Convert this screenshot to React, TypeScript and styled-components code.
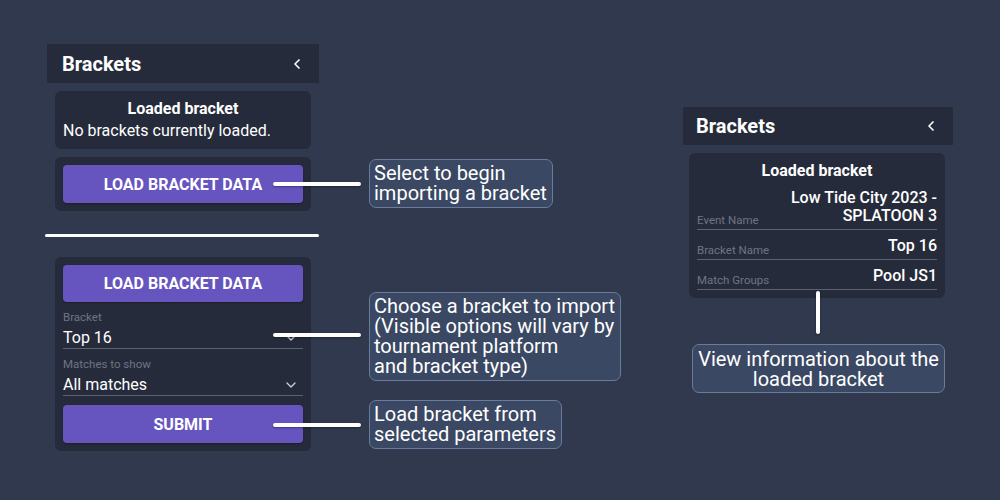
import styled, { createGlobalStyle } from 'styled-components';
import { ChevronLeft, ChevronDown } from 'lucide-react';

const GlobalStyle = createGlobalStyle`
  html, body {
    margin: 0;
    padding: 0;
    background: #30394d;
  }
  body {
    font-family: Roboto, 'Noto Sans', sans-serif;
    color: #ffffff;
  }
`;

const Page = styled.div`
  width: 1000px;
  height: 500px;
  display: flex;
  align-items: flex-start;
  background: #30394d;
  box-sizing: border-box;
  padding: 44px 0 0 47px;
  gap: 364px;
`;

const Column = styled.div<{ $top?: number; $width: number }>`
  width: ${(p) => p.$width}px;
  display: flex;
  flex-direction: column;
  margin-top: ${(p) => p.$top || 0}px;
`;

const Header = styled.div<{ $height: number; $pad: number }>`
  height: ${(p) => p.$height}px;
  background: #262b3b;
  display: flex;
  align-items: center;
  justify-content: space-between;
  padding: 0 14px 0 ${(p) => p.$pad}px;
  font-size: 20px;
  font-weight: 700;
`;

const Card = styled.div<{ $margin?: string }>`
  margin: ${(p) => p.$margin || '8px 8px 0 8px'};
  background: #262b3b;
  border-radius: 6px;
  padding: 8px;
  display: flex;
  flex-direction: column;
`;

const CardTitle = styled.div`
  text-align: center;
  font-size: 16px;
  font-weight: 700;
  line-height: 16px;
  margin-top: 2px;
`;

const Plain = styled.div`
  font-size: 16px;
  line-height: 20px;
  margin-top: 4px;
`;

const Anchor = styled.div<{ $mt?: number }>`
  position: relative;
  margin-top: ${(p) => p.$mt || 0}px;
`;

const Button = styled.button<{ $h?: number }>`
  width: 100%;
  height: ${(p) => p.$h || 38}px;
  border: none;
  border-radius: 4px;
  background: #6654bf;
  color: #ffffff;
  font-family: Roboto, sans-serif;
  font-weight: 700;
  font-size: 16px;
  text-transform: uppercase;
  box-shadow: 0 1px 2px rgba(0, 0, 0, 0.3);
`;

const HConnector = styled.div<{ $left: number; $top: number }>`
  position: absolute;
  left: ${(p) => p.$left}px;
  top: ${(p) => p.$top}px;
  width: 88px;
  height: 4px;
  border-radius: 2px;
  background: #ffffff;
  box-shadow: 0 1px 2px rgba(0, 0, 0, 0.35);
  z-index: 2;
`;

const Callout = styled.div<{ $left?: number; $top?: number }>`
  position: absolute;
  left: ${(p) => p.$left || 0}px;
  top: ${(p) => p.$top || 0}px;
  background: #3a4863;
  border: 1px solid #6a7b9b;
  border-radius: 7px;
  padding: 3px 5px 4px 4px;
  font-size: 20px;
  line-height: 20px;
  white-space: nowrap;
  z-index: 2;
`;

const Separator = styled.div`
  height: 3px;
  margin: 23px 0 12px -2px;
  background: #ffffff;
  border-radius: 2px;
`;

const Field = styled.div`
  display: flex;
  flex-direction: column;
  border-bottom: 1px solid #5d6270;
  padding-top: 8px;
`;

const FieldLabel = styled.div`
  font-size: 11.5px;
  color: #6f7483;
  line-height: 14px;
`;

const FieldValue = styled.div`
  display: flex;
  align-items: center;
  justify-content: space-between;
  font-size: 16px;
  line-height: 20px;
  padding: 4px 0 0;
  color: #ffffff;
  svg {
    color: #c9ccd4;
    margin-right: 4px;
  }
`;

const InfoRow = styled.div<{ $mt: number }>`
  display: flex;
  justify-content: space-between;
  align-items: flex-end;
  border-bottom: 1px solid #5d6270;
  padding-bottom: 1px;
  margin-top: ${(p) => p.$mt}px;
`;

const InfoLabel = styled.div`
  font-size: 11.5px;
  color: #6f7483;
  line-height: 14px;
  margin-bottom: 1px;
`;

const InfoValue = styled.div`
  font-size: 16px;
  font-weight: 500;
  line-height: 18px;
  text-align: right;
  padding-bottom: 3px;
`;

const VConnector = styled.div`
  width: 4px;
  height: 43px;
  margin: -7px auto 0;
  border-radius: 2px;
  background: #ffffff;
  box-shadow: 0 1px 2px rgba(0, 0, 0, 0.35);
  position: relative;
  z-index: 2;
`;

const BottomCallout = styled.div`
  margin: 10px 8px 0 9px;
  background: #3a4863;
  border: 1px solid #6a7b9b;
  border-radius: 7px;
  padding: 4px 2px 3px;
  font-size: 20px;
  line-height: 20px;
  text-align: center;
  white-space: nowrap;
`;

const App = () => {
  return (
    <>
      <GlobalStyle />
      <Page>
        <Column $width={272}>
          <Header $height={39} $pad={15}>
            Brackets
            <ChevronLeft size={16} strokeWidth={2.5} />
          </Header>
          <Card>
            <CardTitle>Loaded bracket</CardTitle>
            <Plain>No brackets currently loaded.</Plain>
          </Card>
          <Card>
            <Anchor>
              <Button>Load bracket data</Button>
              <HConnector $left={210} $top={17} />
              <Callout $left={306} $top={-6}>
                Select to begin
                <br />
                importing a bracket
              </Callout>
            </Anchor>
          </Card>
          <Separator />
          <Card>
            <Button $h={37}>Load bracket data</Button>
            <Anchor>
              <Field>
                <FieldLabel>Bracket</FieldLabel>
                <FieldValue>
                  Top 16
                  <ChevronDown size={16} />
                </FieldValue>
              </Field>
              <HConnector $left={210} $top={31} />
              <Callout $left={306} $top={-10}>
                Choose a bracket to import
                <br />
                (Visible options will vary by
                <br />
                tournament platform
                <br />
                and bracket type)
              </Callout>
            </Anchor>
            <Field>
              <FieldLabel>Matches to show</FieldLabel>
              <FieldValue>
                All matches
                <ChevronDown size={16} />
              </FieldValue>
            </Field>
            <Anchor $mt={9}>
              <Button>Submit</Button>
              <HConnector $left={210} $top={18} />
              <Callout $left={306} $top={-5}>
                Load bracket from
                <br />
                selected parameters
              </Callout>
            </Anchor>
          </Card>
        </Column>

        <Column $top={63} $width={270}>
          <Header $height={38} $pad={13}>
            Brackets
            <ChevronLeft size={16} strokeWidth={2.5} />
          </Header>
          <Card $margin="8px 8px 0 6px">
            <CardTitle>Loaded bracket</CardTitle>
            <InfoRow $mt={10}>
              <InfoLabel>Event Name</InfoLabel>
              <InfoValue>
                Low Tide City 2023 -
                <br />
                SPLATOON 3
              </InfoValue>
            </InfoRow>
            <InfoRow $mt={7}>
              <InfoLabel>Bracket Name</InfoLabel>
              <InfoValue>Top 16</InfoValue>
            </InfoRow>
            <InfoRow $mt={7}>
              <InfoLabel>Match Groups</InfoLabel>
              <InfoValue>Pool JS1</InfoValue>
            </InfoRow>
          </Card>
          <VConnector />
          <BottomCallout>
            View information about the
            <br />
            loaded bracket
          </BottomCallout>
        </Column>
      </Page>
    </>
  );
};

export default App;
